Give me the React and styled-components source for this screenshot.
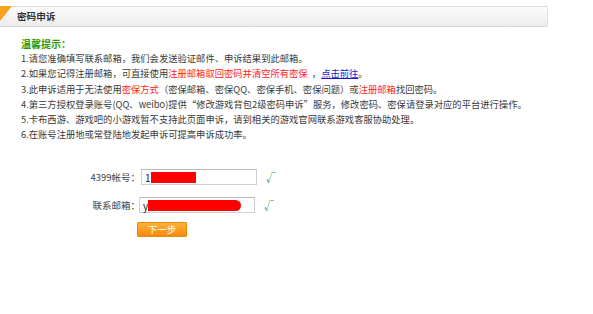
import React from "react";
import styled, { createGlobalStyle } from "styled-components";

const Global = createGlobalStyle`
  html, body { margin: 0; padding: 0; background: #fff; }
  body { font-family: "Noto Sans CJK SC", "Noto Sans", sans-serif; color: #444; }
`;

const Page = styled.div`
  width: 593px;
  height: 314px;
  padding-top: 6px;
  box-sizing: border-box;
`;

const HeaderBar = styled.div`
  position: relative;
  width: 548px;
  height: 21px;
  box-sizing: border-box;
  border-top: 1px solid #dcdcdc;
  border-bottom: 1px solid #d8d8d8;
  border-right: 1px solid #e4e4e4;
  background: linear-gradient(#fbfbfb, #ececec);
  display: flex;
  align-items: center;
  padding-left: 17px;
  &::before {
    content: "";
    position: absolute;
    left: 0;
    top: -1px;
    width: 0;
    height: 0;
    border-top: 15px solid #f7a21b;
    border-right: 12px solid transparent;
  }
`;

const HeaderTitle = styled.span`
  font-size: 9.6px;
  font-weight: bold;
  color: #333;
  line-height: 1;
`;

const Tips = styled.div`
  padding: 9px 0 0 21px;
  font-size: 9.3px;
  line-height: 15.2px;
`;

const TipTitle = styled.div`
  color: #339900;
  font-weight: bold;
  font-size: 10px;
`;

const TipLine = styled.div`
  white-space: nowrap;
  color: #3a3a3a;
`;

const Red = styled.span`
  color: #ff2222;
`;

const Link = styled.a`
  color: #1a1acc;
  text-decoration: underline;
`;

const Form = styled.div`
  margin-top: 27px;
  display: grid;
  grid-template-columns: 140px auto;
  row-gap: 12px;
  align-items: center;
`;

const Label = styled.div`
  font-size: 9.5px;
  color: #444;
  text-align: right;
`;

const FieldWrap = styled.div`
  display: flex;
  align-items: center;
  gap: 9px;
  margin-left: ${(p) => p.$shift || 0}px;
`;

const FakeInput = styled.div`
  width: 116px;
  height: 16px;
  box-sizing: border-box;
  border: 1px solid #cfcfcf;
  border-top-color: #b8b8b8;
  background: #fff;
  display: flex;
  align-items: center;
  padding-left: 3px;
  font-size: 10px;
  color: #222;
`;

const Redact = styled.span`
  display: inline-block;
  height: 11px;
  width: ${(p) => p.$w}px;
  background: #ff0000;
  border-radius: ${(p) => (p.$round ? "0 6px 6px 0" : "0")};
`;

const Check = styled.span`
  color: #3a9a3a;
  font-size: 10px;
`;

const Button = styled.button`
  grid-column: 2;
  margin-left: -3px;
  margin-top: -3px;
  width: 50px;
  height: 15px;
  padding: 0;
  border: 1px solid #e88a10;
  border-radius: 1px;
  background: linear-gradient(#ffb23a, #f58a0a);
  color: #fff;
  font-family: inherit;
  font-size: 9.5px;
  line-height: 13px;
  cursor: pointer;
`;

export default function App() {
  return (
    <Page>
      <Global />
      <HeaderBar>
        <HeaderTitle>密码申诉</HeaderTitle>
      </HeaderBar>
      <Tips>
        <TipTitle>温馨提示：</TipTitle>
        <TipLine>1.请您准确填写联系邮箱，我们会发送验证邮件、申诉结果到此邮箱。</TipLine>
        <TipLine>
          2.如果您记得注册邮箱，可直接使用<Red>注册邮箱取回密码并清空所有密保</Red>&nbsp;&nbsp;，
          <Link href="#">点击前往</Link>。
        </TipLine>
        <TipLine>
          3.此申诉适用于无法使用<Red>密保方式</Red>（密保邮箱、密保QQ、密保手机、密保问题）或
          <Red>注册邮箱</Red>找回密码。
        </TipLine>
        <TipLine>
          4.第三方授权登录账号(QQ、weibo)提供“修改游戏背包2级密码申诉”服务，修改密码、密保请登录对应的平台进行操作。
        </TipLine>
        <TipLine>5.卡布西游、游戏吧的小游戏暂不支持此页面申诉，请到相关的游戏官网联系游戏客服协助处理。</TipLine>
        <TipLine>6.在账号注册地或常登陆地发起申诉可提高申诉成功率。</TipLine>
      </Tips>
      <Form>
        <Label>4399帐号：</Label>
        <FieldWrap $shift={1}>
          <FakeInput>
            1<Redact $w={45} />
          </FakeInput>
          <Check>√</Check>
        </FieldWrap>
        <Label>联系邮箱：</Label>
        <FieldWrap $shift={-1}>
          <FakeInput>
            y<Redact $w={93} $round />
          </FakeInput>
          <Check>√</Check>
        </FieldWrap>
        <Button>下一步</Button>
      </Form>
    </Page>
  );
}
